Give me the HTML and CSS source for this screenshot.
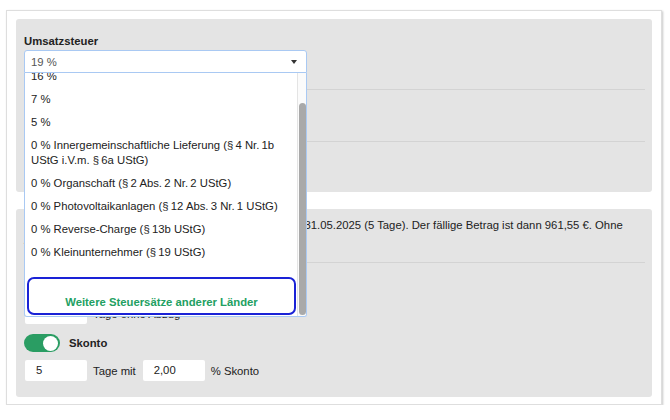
FILE: index.html
```html
<!DOCTYPE html>
<html lang="de">
<head>
<meta charset="utf-8">
<title>Umsatzsteuer</title>
<link rel="stylesheet" href="styles.css">
</head>
<body>
<div class="card">
  <section class="panel panel-tax">
    <div class="label">Umsatzsteuer</div>
    <div class="select-wrap">
      <div class="select">
        <span class="select-value">19 %</span>
        <span class="caret"></span>
      </div>
      <div class="dropdown">
        <ul class="options">
          <li>19 %</li>
          <li>16 %</li>
          <li>7 %</li>
          <li>5 %</li>
          <li>0 % Innergemeinschaftliche Lieferung (§&#8239;4 Nr.&#8239;1b UStG i.V.m. §&#8239;6a UStG)</li>
          <li>0 % Organschaft (§&#8239;2 Abs.&#8239;2 Nr.&#8239;2 UStG)</li>
          <li>0 % Photovoltaikanlagen (§&#8239;12 Abs.&#8239;3 Nr.&#8239;1 UStG)</li>
          <li>0 % Reverse-Charge (§&#8239;13b UStG)</li>
          <li>0 % Kleinunternehmer (§&#8239;19 UStG)</li>
        </ul>
        <div class="more">Weitere Steuersätze anderer Länder</div>
        <div class="scrollbar"><div class="thumb"></div></div>
      </div>
    </div>
    <div class="divider first"></div>
    <div class="hidden-row">
      <span class="toggle off"><span class="knob"></span></span>
      <span class="row-label">Bruttopreise</span>
    </div>
    <div class="divider"></div>
    <div class="hidden-row">
      <span class="toggle off"><span class="knob"></span></span>
      <span class="row-label">Rabatt</span>
    </div>
  </section>

  <section class="panel panel-pay">
    <p class="info">Bei Zahlung innerhalb von 5 Tagen 2 % Skonto bis zum 31.05.2025 (5 Tage). Der fällige Betrag ist dann 961,55 €. Ohne Abzug zahlbar bis 09.06.2025.</p>
    <div class="divider pay"></div>
    <div class="toggle-row first-toggle">
      <span class="toggle"><span class="knob"></span></span>
      <span class="row-label">Zahlungsziel</span>
    </div>
    <div class="input-row">
      <span class="field">14</span>
      <span class="field-label">Tage ohne Abzug</span>
    </div>
    <div class="toggle-row second-toggle">
      <span class="toggle"><span class="knob"></span></span>
      <span class="row-label">Skonto</span>
    </div>
    <div class="input-row">
      <span class="field">5</span>
      <span class="field-label">Tage mit</span>
      <span class="field">2,00</span>
      <span class="field-label">% Skonto</span>
    </div>
  </section>
</div>
</body>
</html>
```

FILE: styles.css
```css
* { box-sizing: border-box; }

body {
  margin: 0;
  background: #ffffff;
  font-family: "Liberation Sans", Arial, sans-serif;
  font-size: 11.3px;
  color: #222222;
}

.card {
  margin: 10px 0 0 6px;
  width: 656px;
  height: 395px;
  background: #ffffff;
  border: 1px solid #dedede;
  box-shadow: 1px 1px 2px rgba(0, 0, 0, 0.22);
  padding: 8px 9px 7px 9px;
  display: flex;
  flex-direction: column;
}

.panel {
  background: #e4e4e4;
  border-radius: 3px;
  padding: 0 7px 0 8px;
  display: flex;
  flex-direction: column;
}

.panel-tax {
  height: 173px;
  padding-top: 15px;
}

.panel-pay {
  margin-top: 17px;
  height: 188px;
  padding-top: 9px;
}

.label {
  font-weight: bold;
  line-height: 15px;
  margin-bottom: 1px;
}

.select-wrap {
  position: relative;
  width: 283px;
}

.select {
  height: 23px;
  background: #ffffff;
  border: 1px solid #a9c9f3;
  border-radius: 3px 3px 0 0;
  display: flex;
  align-items: center;
  justify-content: space-between;
  padding: 0 9px 0 6px;
}

.select-value {
  color: #555555;
}

.caret {
  width: 0;
  height: 0;
  border-left: 3px solid transparent;
  border-right: 3px solid transparent;
  border-top: 4px solid #333333;
}

.dropdown {
  position: absolute;
  top: 100%;
  left: 0;
  width: 283px;
  height: 244px;
  background: #ffffff;
  border: 1px solid #a9c9f3;
  border-top: none;
  border-radius: 0 0 3px 3px;
  overflow: hidden;
  z-index: 5;
}

.options {
  list-style: none;
  margin: -31px 0 0 0;
  padding: 0 12px 0 0;
}

.options li {
  padding: 4px 6px;
  line-height: 15px;
  color: #222222;
}

.more {
  margin: 13px 10px 0 2px;
  border: 2px solid #1a22d6;
  border-radius: 7px;
  padding: 16px 0 3px 0;
  line-height: 15px;
  text-align: center;
  font-weight: bold;
  color: #22a062;
}

.scrollbar {
  position: absolute;
  top: 0;
  right: 0;
  bottom: 0;
  width: 9px;
  background: #fbfbfb;
  border-left: 1px solid #e4e4e4;
}

.thumb {
  position: absolute;
  top: 30px;
  bottom: 1px;
  left: 1px;
  right: 0;
  background: #a9a9a9;
  border-radius: 4px;
}

.divider {
  height: 1px;
  background: #d3d3d3;
}

.divider.first {
  margin-top: 16px;
}

.hidden-row {
  height: 53px;
  display: flex;
  align-items: center;
  gap: 9px;
}

.row-label {
  font-weight: bold;
}

.toggle {
  width: 36px;
  height: 18px;
  border-radius: 9px;
  background: #2a9d63;
  display: flex;
  align-items: center;
  justify-content: flex-end;
  padding: 0 2px;
}

.toggle.off {
  background: #bdbdbd;
  justify-content: flex-start;
}

.knob {
  width: 15px;
  height: 15px;
  border-radius: 50%;
  background: #ffffff;
}

.info {
  margin: 0;
  line-height: 15px;
  padding-right: 12px;
}

.divider.pay {
  margin-top: 14px;
}

.toggle-row {
  display: flex;
  align-items: center;
  gap: 9px;
  height: 18px;
}

.first-toggle {
  margin-top: 14px;
}

.second-toggle {
  margin-top: 10px;
}

.input-row {
  margin-top: 8px;
  display: flex;
  align-items: center;
  height: 21px;
}

.field {
  width: 62px;
  height: 21px;
  background: #ffffff;
  border-radius: 2px;
  padding: 0 11px;
  line-height: 21px;
  margin-left: 1px;
}

.field-label {
  margin: 0 6px 0 6px;
}
```
